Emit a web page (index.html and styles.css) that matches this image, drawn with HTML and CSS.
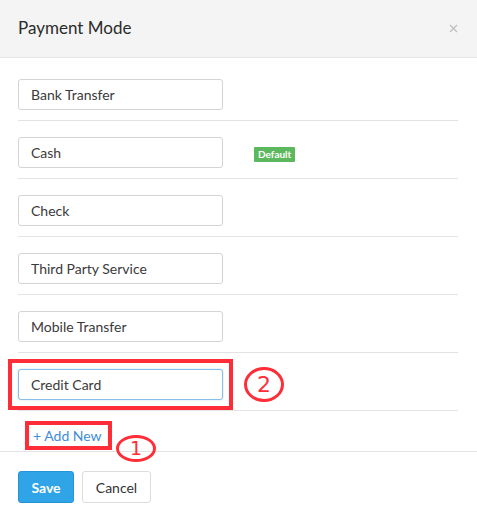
FILE: index.html
```html
<!DOCTYPE html>
<html>
<head>
    <title>Payment Mode</title>
    <link rel="stylesheet" href="styles.css">
</head>
<body>
    <div class="modal">
        <div class="modal-header">
            <h3>Payment Mode</h3>
            <button class="close-btn" type="button">
                <svg width="9" height="9" viewBox="0 0 9 9"><path d="M1 1L8 8M8 1L1 8" stroke="#bdbdbd" stroke-width="1.2"/></svg>
            </button>
        </div>
        <div class="modal-body">
            <div class="mode-row">
                <input type="text" value="Bank Transfer">
            </div>
            <div class="mode-row">
                <input type="text" value="Cash">
                <span class="badge">Default</span>
            </div>
            <div class="mode-row">
                <input type="text" value="Check">
            </div>
            <div class="mode-row">
                <input type="text" value="Third Party Service">
            </div>
            <div class="mode-row">
                <input type="text" value="Mobile Transfer">
            </div>
            <div class="mode-row">
                <span class="mark-box">
                    <input type="text" value="Credit Card" class="focused">
                </span>
                <span class="step step-two">2</span>
            </div>
            <div class="add-row">
                <a href="#" class="add-link">+ Add New</a>
                <span class="step step-one">1</span>
            </div>
        </div>
        <div class="modal-footer">
            <button class="btn btn-primary" type="button">Save</button>
            <button class="btn btn-default" type="button">Cancel</button>
        </div>
    </div>
</body>
</html>
```

FILE: styles.css
```css
:root {
    --text: #333333;
    --line: #e3e3e3;
    --blue: #2fa4e7;
    --link: #408dd6;
    --green: #5cb85c;
    --mark: #ff2d38;
}

* { box-sizing: border-box; margin: 0; padding: 0; }

body {
    font-family: Lato, "Open Sans", sans-serif;
    color: var(--text);
    background: #ffffff;
}

.modal {
    width: 477px;
    height: 520px;
    background: #ffffff;
}

.modal-header {
    height: 58px;
    display: flex;
    align-items: center;
    justify-content: space-between;
    padding: 0 19px 2px 18px;
    background: #f4f4f4;
    border-bottom: 1px solid #e6e6e6;
}

.modal-header h3 {
    font-size: 17px;
    font-weight: 400;
    color: #2b2b2b;
}

.close-btn {
    border: none;
    background: none;
    display: flex;
    cursor: pointer;
    margin-top: 1px;
}

.modal-body {
    padding: 5px 19px 0 18px;
}

.mode-row {
    display: flex;
    align-items: center;
    height: 58px;
    padding: 16px 0 10px;
    border-bottom: 1px solid var(--line);
}

input {
    width: 205px;
    height: 31px;
    padding: 0 12px;
    border: 1px solid #d4d4d4;
    border-radius: 3px;
    font-family: inherit;
    font-size: 14px;
    color: #3a3a3a;
    background: #ffffff;
}

input.focused {
    border-color: #86bde9;
    box-shadow: 0 0 2px rgba(80, 160, 230, 0.4);
}

.mark-box {
    display: flex;
    margin: -10px;
    padding: 6px;
    border: 4px solid var(--mark);
}

.badge {
    height: 15px;
    margin-left: 31px;
    margin-top: 4px;
    background: var(--green);
    color: #ffffff;
    font-size: 10px;
    font-weight: 700;
    line-height: 15px;
    padding: 0 4px;
    border-radius: 1px;
}

.step {
    display: flex;
    align-items: center;
    justify-content: center;
    border: 3px solid var(--mark);
    border-radius: 50%;
    color: var(--mark);
    font-family: "DejaVu Sans", sans-serif;
    background: transparent;
}

.step-two {
    width: 40px;
    height: 35px;
    margin: -2px 0 -2px 21px;
    font-size: 22px;
}

.add-row {
    position: relative;
    height: 41px;
    margin: 0 -19px 0 -18px;
    padding: 10px 0 0 25px;
    border-bottom: 1px solid var(--line);
}

.add-link {
    display: inline-block;
    height: 29px;
    line-height: 21px;
    padding: 0 6px 0 4px;
    border: 4px solid var(--mark);
    color: var(--link);
    font-size: 14px;
    text-decoration: none;
}

.step-one {
    position: absolute;
    left: 116px;
    top: 24px;
    width: 40px;
    height: 27px;
    font-size: 19px;
    line-height: 1;
}

.modal-footer {
    display: flex;
    gap: 8px;
    padding: 19px 18px;
}

.btn {
    height: 32px;
    border-radius: 3px;
    font-family: inherit;
    font-size: 14px;
    cursor: pointer;
}

.btn-primary {
    width: 56px;
    background: var(--blue);
    border: 1px solid #2494d6;
    color: #ffffff;
    font-weight: 700;
}

.btn-default {
    width: 69px;
    background: #ffffff;
    border: 1px solid #dcdcdc;
    color: #333333;
}
```
